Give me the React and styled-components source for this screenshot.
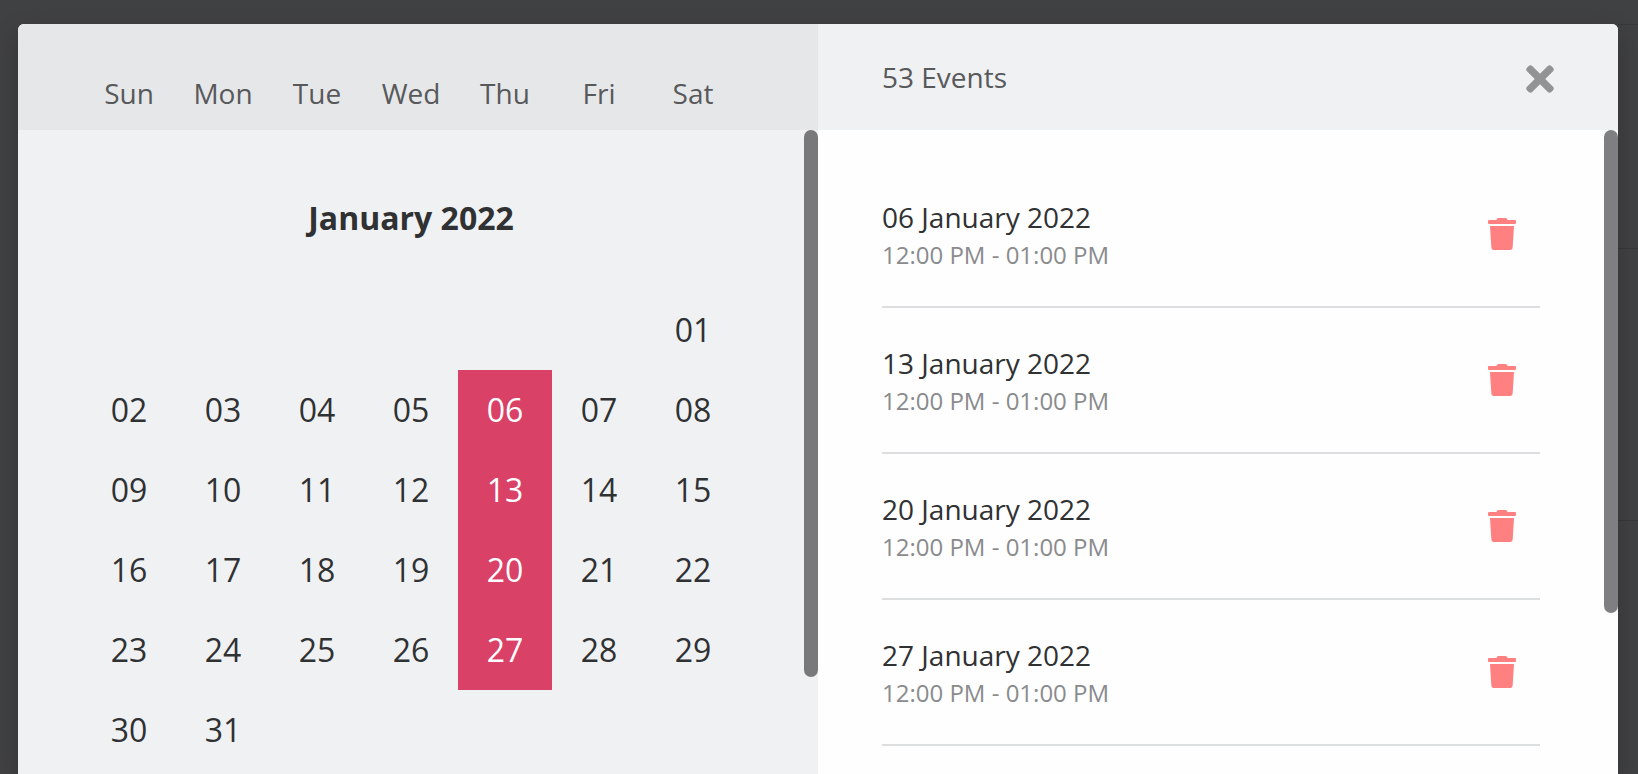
import React from "react";
import styled, { createGlobalStyle } from "styled-components";
import { FaTimes, FaTrash } from "react-icons/fa";

const GlobalStyle = createGlobalStyle`
  *, *::before, *::after { box-sizing: border-box; }
  body {
    margin: 0;
    background: #404143;
    color: #303133;
    font-family: "Open Sans", "Noto Sans", sans-serif;
  }
`;

const Backdrop = styled.div`
  display: flex;
  height: 100vh;
  overflow: hidden;
  padding: 24px 0 0 18px;
`;

const BackdropEdge = styled.div`
  flex: 0 0 20px;
  display: grid;
  grid-template-rows: 224px 272px 1fr;
`;

const BackdropPanel = styled.div`
  border-top: 1px solid #38393b;
`;

const Modal = styled.main`
  position: relative;
  flex: 1;
  min-width: 0;
  display: grid;
  grid-template-columns: 1fr 1fr;
  grid-template-rows: 106px minmax(0, 1fr);
  border-radius: 6px 6px 0 0;
  background: #fefefe;
  box-shadow: 0 8px 24px rgba(0, 0, 0, 0.2);
`;

const WeekHeader = styled.header`
  display: grid;
  grid-template-columns: repeat(7, 1fr);
  padding: 49px 78px 0 64px;
  border-top-left-radius: 6px;
  background: #e6e7e9;
`;

const Weekday = styled.span`
  color: #58595b;
  font-size: 28px;
  line-height: 40px;
  text-align: center;
`;

const EventsHeader = styled.header`
  display: flex;
  align-items: flex-start;
  justify-content: space-between;
  padding: 33px 58px 0 64px;
  border-top-right-radius: 6px;
  background: #f0f1f3;
`;

const EventCount = styled.h2`
  margin: 0;
  color: #58595b;
  font-size: 28px;
  font-weight: 400;
  line-height: 40px;
`;

const IconButton = styled.button`
  display: flex;
  align-items: center;
  min-height: 44px;
  padding: 0;
  border: 0;
  background: none;
  color: ${({ $color }) => $color};
  font-size: ${({ $size }) => $size}px;
  cursor: pointer;
`;

const Pane = styled.section`
  display: flex;
  min-height: 0;
  overflow: hidden;
  background: ${({ $background }) => $background};
`;

const PaneContent = styled.div`
  flex: 1;
  min-width: 0;
  padding: ${({ $top }) => $top}px 64px 0;
`;

const ScrollTrack = styled.div`
  flex: 0 0 14px;
`;

const ScrollThumb = styled.div`
  height: ${({ $length }) => $length};
  border-radius: 7px;
  background: ${({ $color }) => $color};
`;

const Month = styled.h1`
  margin: 0 0 50px;
  font-size: 32px;
  font-weight: 700;
  line-height: 44px;
  text-align: center;
`;

const DayGrid = styled.div`
  display: grid;
  grid-template-columns: repeat(7, 1fr);
  grid-auto-rows: 80px;
`;

const Day = styled.button`
  grid-column-start: ${({ $column }) => $column || "auto"};
  padding: 0;
  border: 0;
  background: ${({ $selected }) => ($selected ? "#d94167" : "transparent")};
  color: ${({ $selected }) => ($selected ? "#fff" : "inherit")};
  font: inherit;
  font-size: 32px;
  line-height: 44px;
  cursor: pointer;
`;

const EventList = styled.ul`
  margin: 0;
  padding: 0;
  list-style: none;
`;

const EventRow = styled.li`
  display: flex;
  align-items: center;
  justify-content: space-between;
  height: 146px;
  padding-right: 22px;
  border-bottom: 2px solid #dcdedf;
`;

const EventDate = styled.div`
  font-size: 28px;
  line-height: 42px;
`;

const EventTime = styled.div`
  color: #8a8b8d;
  font-size: 24px;
  line-height: 34px;
`;

const weekdays = ["Sun", "Mon", "Tue", "Wed", "Thu", "Fri", "Sat"];
const selected = [6, 13, 20, 27];
const pad = (n) => String(n).padStart(2, "0");
const days = Array.from({ length: 31 }, (_, i) => i + 1);

export default function App() {
  return (
    <>
      <GlobalStyle />
      <Backdrop>
        <Modal>
          <WeekHeader>
            {weekdays.map((name) => (
              <Weekday key={name}>{name}</Weekday>
            ))}
          </WeekHeader>
          <EventsHeader>
            <EventCount>53 Events</EventCount>
            <IconButton type="button" aria-label="Close" $color="#929395" $size={40}>
              <FaTimes />
            </IconButton>
          </EventsHeader>
          <Pane $background="#f0f1f3">
            <PaneContent $top={66}>
              <Month>January 2022</Month>
              <DayGrid>
                {days.map((day) => (
                  <Day
                    key={day}
                    type="button"
                    $column={day === 1 ? 7 : undefined}
                    $selected={selected.includes(day)}
                    aria-pressed={selected.includes(day)}
                  >
                    {pad(day)}
                  </Day>
                ))}
              </DayGrid>
            </PaneContent>
            <ScrollTrack>
              <ScrollThumb $length="85%" $color="#79797b" />
            </ScrollTrack>
          </Pane>
          <Pane $background="#fefefe">
            <PaneContent $top={32}>
              <EventList>
                {selected.map((day) => (
                  <EventRow key={day}>
                    <div>
                      <EventDate>{pad(day)} January 2022</EventDate>
                      <EventTime>12:00 PM - 01:00 PM</EventTime>
                    </div>
                    <IconButton
                      type="button"
                      aria-label={`Delete ${pad(day)} January 2022`}
                      $color="#ff8080"
                      $size={32}
                    >
                      <FaTrash />
                    </IconButton>
                  </EventRow>
                ))}
              </EventList>
            </PaneContent>
            <ScrollTrack>
              <ScrollThumb $length="75%" $color="#7f7f81" />
            </ScrollTrack>
          </Pane>
        </Modal>
        <BackdropEdge>
          <BackdropPanel />
          <BackdropPanel />
          <BackdropPanel />
        </BackdropEdge>
      </Backdrop>
    </>
  );
}
